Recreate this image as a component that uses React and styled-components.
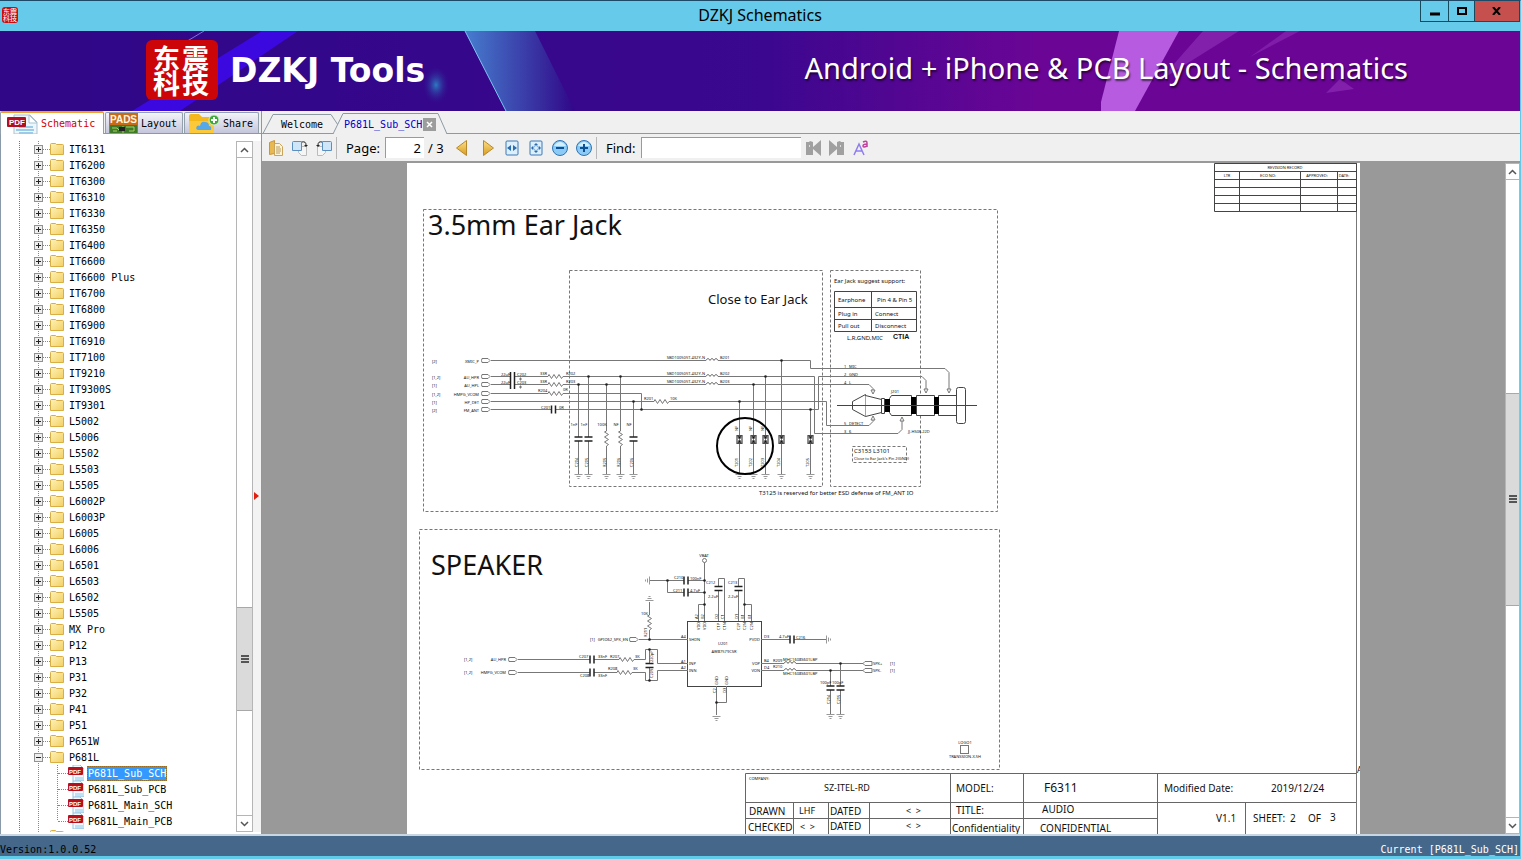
import React, { useState } from "react";
import styled, { createGlobalStyle } from "styled-components";

const GlobalStyle = createGlobalStyle`
  * {
    box-sizing: border-box;
  }
  body {
    margin: 0;
    overflow: hidden;
    font-family: "DejaVu Sans Mono", "Liberation Mono", monospace;
    font-size: 10px;
    color: #000;
  }
  button {
    font: inherit;
    color: inherit;
    padding: 0;
    margin: 0;
    border: 0;
    background: none;
  }
`;

const Window = styled.div`
  display: flex;
  flex-direction: column;
  height: 100vh;
  background: #f0f0f0;
  border-top: 1px solid #1d4a66;
  border-right: 1px solid #5fcbe8;
  border-bottom: 3px solid #5fcbe8;
`;

const TitleBar = styled.header`
  display: grid;
  grid-template-columns: 1fr auto 1fr;
  height: 30px;
  flex: none;
  background: #66cbea;
`;

const AppIcon = styled.span`
  display: grid;
  grid-template-columns: 7px 7px;
  align-content: center;
  justify-content: center;
  width: 16px;
  height: 16px;
  margin: 6px 2px;
  border-radius: 3px;
  background: #c80d0d;
  color: #fff;
  font-family: "Noto Sans CJK SC", sans-serif;
  font-size: 7px;
  line-height: 7px;
`;

const WindowTitle = styled.h1`
  margin: 0;
  font-family: "Noto Sans", sans-serif;
  font-size: 16px;
  font-weight: 400;
  line-height: 29px;
`;

const WindowButtons = styled.div`
  display: flex;
  justify-self: end;
  height: 21px;
`;

const WindowButton = styled.button`
  display: grid;
  place-items: center;
  width: ${(p) => p.$width};
  border: 1px solid #174a5c;
  border-top: 0;
  margin-left: -1px;
  background: ${(p) => (p.$danger ? "#c6504e" : "transparent")};
`;

const Banner = styled.div`
  position: relative;
  display: flex;
  align-items: center;
  justify-content: space-between;
  height: 80px;
  flex: none;
  padding: 0 112px 2px 146px;
  color: #fff;
  font-family: "Noto Sans", sans-serif;
`;

const BannerArt = styled.svg`
  position: absolute;
  inset: 0;
  width: 100%;
  height: 100%;
`;

const Brand = styled.div`
  position: relative;
  display: flex;
  align-items: center;
  gap: 12px;
  font-family: "DejaVu Sans", sans-serif;
  font-size: 33px;
  font-weight: 700;
`;

const Seal = styled.span`
  display: grid;
  grid-template-columns: 29px 29px;
  align-content: center;
  justify-content: center;
  width: 72px;
  height: 60px;
  border-radius: 6px;
  background: #cc0508;
  font-family: "Noto Sans CJK SC", sans-serif;
  font-size: 27px;
  line-height: 25px;
`;

const Slogan = styled.p`
  position: relative;
  margin: 0 0 6px;
  font-size: 29px;
  text-shadow: 1px 2px 2px rgba(0, 0, 0, 0.6);
`;

const Body = styled.div`
  display: flex;
  flex: 1;
  min-height: 0;
`;

const Sidebar = styled.aside`
  display: flex;
  flex-direction: column;
  width: 262px;
  flex: none;
  border-right: 1px solid #8a99a8;
  background: #f0f0f0;
`;

const SideTabs = styled.nav`
  display: flex;
  gap: 1px;
  height: 23px;
  flex: none;
  border-bottom: 1px solid #8a9aa5;
`;

const SideTab = styled.button`
  display: flex;
  align-items: center;
  gap: 3px;
  height: ${(p) => (p.$active ? "23px" : "21px")};
  width: ${(p) => p.$width};
  margin-top: ${(p) => (p.$active ? "0" : "1px")};
  padding-left: ${(p) => (p.$active ? "6px" : "3px")};
  border: 1px solid #91a0aa;
  border-bottom: 0;
  border-radius: 2px 2px 0 0;
  background: ${(p) =>
    p.$active ? "#fff" : "linear-gradient(#f3f3f9, #c5c6dc)"};
  color: ${(p) => (p.$active ? "#d00000" : "#000")};
  ${(p) => p.$active && "border-top: 2px solid #f0a030;"}
`;

const TreePane = styled.div`
  display: flex;
  flex: 1;
  min-height: 0;
  padding: 7px 0 2px;
  border-left: 1px solid #8a9aa8;
  background: #fff;
`;

const Tree = styled.ul`
  flex: 1;
  min-width: 0;
  margin: 0 0 0 18px;
  padding: 0;
  overflow: hidden;
  list-style: none;
  border-left: 1px dotted #777;
`;

const TreeRow = styled.li`
  display: flex;
  align-items: center;
  height: 16px;
  padding-left: 14px;
  background: repeating-linear-gradient(#888 0 1px, #fff 1px 2px) no-repeat 18px
    0 / 1px 100%;
`;

const FileRow = styled(TreeRow)`
  padding-left: 0;
  background:
    repeating-linear-gradient(#888 0 1px, #fff 1px 2px) no-repeat 18px 0 / 1px
      100%,
    repeating-linear-gradient(#888 0 1px, #fff 1px 2px) no-repeat 37px 0 / 1px
      ${(p) => (p.$last ? "8px" : "100%")};

  &::before {
    content: "";
    width: 10px;
    margin-left: 38px;
    border-top: 1px dotted #888;
  }
`;

const NextRow = styled(TreeRow)`
  align-items: flex-start;
  padding: 1px 0 0 30px;
`;

const Toggle = styled.button`
  display: grid;
  place-items: center;
  width: 9px;
  height: 9px;
  border: 1px solid #919191;
  background: #eee;
`;

const Stub = styled.span`
  width: 7px;
  border-top: 1px dotted #888;
`;

const NodeLabel = styled.button`
  height: 15px;
  margin-left: ${(p) => (p.$file ? "3px" : "4px")};
  padding: 0 1px;
  line-height: 15px;
  white-space: pre;
  ${(p) =>
    p.$selected &&
    `
    color: #fff;
    background: #3399ff;
    outline: 1px dotted #9a6a20;
    outline-offset: -1px;
  `}
`;

const Bar = styled.div`
  display: flex;
  flex-direction: column;
  width: ${(p) => p.$width};
  flex: none;
  border: 1px solid #b5b5b5;
  background: #fff;
`;

const BarButton = styled.button`
  display: grid;
  place-items: center;
  height: 16px;
  flex: none;
  border: solid #b5b5b5;
  border-width: ${(p) => (p.$down ? "1px 0 0" : "0 0 1px")};
`;

const BarTrack = styled.div`
  display: grid;
  flex: 1;
  grid-template-rows: ${(p) => p.$rows};
`;

const Thumb = styled.div`
  display: grid;
  place-items: center;
  grid-row: 2;
  border: solid #a8a8a8;
  border-width: 1px 0;
  background: #dadada;
`;

const Splitter = styled.div`
  display: flex;
  align-items: center;
  width: 8px;
  flex: none;
  padding: 18px 0 0 1px;
  background: #f3f3f3;
`;

const Main = styled.main`
  display: flex;
  flex: 1;
  flex-direction: column;
  min-width: 0;
`;

const DocTabs = styled.nav`
  display: flex;
  height: 23px;
  flex: none;
  border-bottom: 1px solid #8d9aa3;
`;

const DocTab = styled.div`
  position: relative;
  display: flex;
  align-items: center;
  gap: 1px;
  width: ${(p) => p.$width};
  height: 23px;
  margin-left: ${(p) => (p.$active ? "-6px" : "1px")};
  padding: 4px 0 0 ${(p) => (p.$active ? "11px" : "18px")};
  color: ${(p) => (p.$active ? "#0000d0" : "#000")};

  svg {
    position: absolute;
    inset: 0;
  }
  button {
    position: relative;
  }
`;

const CloseTab = styled.button`
  display: grid;
  place-items: center;
  width: 13px;
  height: 13px;
  background: #9c9c9c;

  && svg {
    position: static;
  }
`;

const Toolbar = styled.div`
  display: flex;
  align-items: center;
  height: 29px;
  flex: none;
  padding: 0 2px;
  border-bottom: 2px solid #999;
  font-family: "Noto Sans", sans-serif;
  font-size: 13px;
`;

const ToolButton = styled.button`
  display: grid;
  place-items: center;
  width: 24px;
  height: 24px;
  margin-right: ${(p) => p.$gap || "0"};
`;

const Divider = styled.span`
  width: 1px;
  height: 22px;
  background: #b8b8b8;
`;

const Label = styled.label`
  margin: 0 5px 0 9px;
`;

const Field = styled.input`
  width: ${(p) => p.$width};
  height: 21px;
  padding: 0 3px;
  border: solid #9a9a9a;
  border-width: 1px 0 0 1px;
  border-radius: 0;
  background: #fff;
  font: inherit;
  text-align: ${(p) => p.$align || "left"};
`;

const PageCount = styled.span`
  width: 22px;
  margin-left: 4px;
`;

const Viewer = styled.div`
  display: flex;
  flex: 1;
  min-height: 0;
`;

const Canvas = styled.div`
  display: flex;
  flex: 1;
  justify-content: center;
  align-items: flex-start;
  min-width: 0;
  overflow: hidden;
  background: #999;
`;

const Sheet = styled.svg`
  flex: none;
  display: block;
  background: #fff;
  font-family: "Noto Sans", sans-serif;
`;

const StatusBar = styled.footer`
  display: flex;
  align-items: center;
  justify-content: space-between;
  height: 22px;
  flex: none;
  padding: 6px 1px 0 0;
  border-top: 2px solid #c9d6e2;
  background: #44678a;

  span:last-child {
    color: #fff;
  }
`;

/* ---------- icons ---------- */

const PdfIcon = ({ size = 16 }) => (
  <svg width={size} height={size} viewBox="0 0 16 16" aria-hidden="true">
    <path d="M5 0h7l4 4v12H5z" fill="#f4faff" stroke="#9cc3dc" />
    <path d="M7 13h8M7 15h8" stroke="#8cc8ea" />
    <rect x="0" y="2" width="15" height="8" rx="1" fill="#b80f1d" />
    <text x="1" y="9" fontSize="6" fontWeight="700" fill="#fff" fontFamily="Liberation Sans">
      PDF
    </text>
  </svg>
);

const SchematicIcon = () => (
  <svg width="31" height="20" viewBox="0 0 31 20" aria-hidden="true">
    <path d="M7 1h16l7 7v12H7z" fill="#eef6fb" stroke="#a9c3d2" />
    <path d="M22 1v8h8z" fill="#fff" stroke="#a9c3d2" />
    <path d="M12 13h14M9 16h18M12 19h14" stroke="#9ccbe8" strokeWidth="2" />
    <rect x="0" y="3" width="19" height="10" rx="1" fill="#b01022" />
    <text x="2" y="11" fontSize="8" fontWeight="700" fill="#fff" fontFamily="Liberation Sans">
      PDF
    </text>
  </svg>
);

const PadsIcon = () => (
  <svg width="29" height="20" viewBox="0 0 29 20" aria-hidden="true">
    <rect width="29" height="20" fill="#c86a18" />
    <rect x="1" y="12" width="27" height="8" fill="#3f7a2a" />
    <path d="M3 15h5l3 3M14 13v7M17 14h8v4h-5M4 18h4" stroke="#a8d060" fill="none" />
    <rect x="10" y="14" width="6" height="4" fill="#222" />
    <text x="1" y="10" fontSize="10" fontWeight="700" fill="#fff6e0" fontFamily="Liberation Sans">
      PADS
    </text>
  </svg>
);

const ShareIcon = () => (
  <svg width="32" height="20" viewBox="0 0 32 20" aria-hidden="true">
    <path d="M1 3q0-2 2-2h8l3 3h10q2 0 2 2v14H1z" fill="#f5b81c" />
    <path d="M1 8h25v12H1z" fill="#fcc93a" />
    <path d="M10 17q-3-1-1-4q2-1 3 0q1-5 5-4q4 0 4 4q3 0 2 4z" fill="#56a8e8" />
    <circle cx="26" cy="7" r="5" fill="#3caa3a" stroke="#d8f0d0" />
    <path d="M26 4v6M23 7h6" stroke="#fff" strokeWidth="2" />
  </svg>
);

const FolderIcon = () => (
  <svg width="14" height="12" viewBox="0 0 14 12" aria-hidden="true">
    <defs>
      <linearGradient id="folder" x1="0" y1="0" x2="1" y2="1">
        <stop offset="0" stopColor="#fff3b8" />
        <stop offset="1" stopColor="#f2cf63" />
      </linearGradient>
    </defs>
    <path d="M.5 1.5q0-1 1-1h4l1 1h6q1 0 1 1v9H.5z" fill="url(#folder)" stroke="#d9ae45" />
  </svg>
);

const Grip = () => (
  <svg width="8" height="8" viewBox="0 0 8 8" aria-hidden="true">
    <path d="M0 1h8M0 4h8M0 7h8" stroke="#555" strokeWidth="2" />
  </svg>
);

const Chevron = ({ down }) => (
  <svg width="9" height="6" viewBox="0 0 9 6" aria-hidden="true">
    <path d={down ? "M1 1l3.500 3.500L8 1" : "M1 5l3.500-3.500L8 5"} fill="none" stroke="#555" strokeWidth="1.500" />
  </svg>
);

const Glyph = ({ children, w = 16, h = 16 }) => (
  <svg width={w} height={h} viewBox={`0 0 ${w} ${h}`} fill="none" aria-hidden="true">
    {children}
  </svg>
);

const OpenGlyph = () => (
  <Glyph>
    <path d="M1.500 2.500l5-2v13l-5 1z" fill="#e9b850" stroke="#c7953a" />
    <path d="M6.500 3.500h5l3 3v9h-8z" fill="#fdf3d6" stroke="#c9a45a" />
    <path d="M8 7h4M8 9h5M8 11h5M8 13h4" stroke="#b99a5c" />
  </Glyph>
);

const RotateGlyph = ({ flip }) => (
  <Glyph>
    <g transform={flip ? "translate(16 0) scale(-1 1)" : undefined}>
      <path d="M6.500 6.500h8v9h-5l-3-3z" fill="#f5f5f5" stroke="#bbb" />
      <path d="M.5 2.500q0-1 1-1h8v9h-9z" fill="#cfe6f8" stroke="#5b8fc0" />
      <path d="M10 2q4-1 4 3" stroke="#222" />
      <path d="M12 5h4l-2 2z" fill="#222" />
    </g>
  </Glyph>
);

const ArrowGlyph = ({ flip }) => (
  <Glyph>
    <defs>
      <linearGradient id="gold" x1="0" y1="0" x2="0" y2="1">
        <stop offset="0" stopColor="#fbe08a" />
        <stop offset="1" stopColor="#d99b1c" />
      </linearGradient>
    </defs>
    <path
      d={flip ? "M3.500 .5l10 7.500-10 7.500z" : "M12.500 .5l-10 7.500 10 7.500z"}
      fill="url(#gold)"
      stroke="#b8892c"
    />
  </Glyph>
);

const FitGlyph = ({ page }) => (
  <Glyph>
    <rect x="2" y="1" width="12" height="14" rx="1" fill="#dceffc" stroke="#3d78b4" />
    {page ? (
      <g>
        <path d="M8 3l2 2H6zM8 13l2-2H6zM3 8l2-2v4zM13 8l-2-2v4z" fill="#2b6cae" />
        <circle cx="8" cy="8" r="2.500" stroke="#6aa2d4" />
      </g>
    ) : (
      <path d="M3 8l4-3v6zM13 8l-4-3v6z" fill="#2b6cae" />
    )}
  </Glyph>
);

const ZoomGlyph = ({ plus }) => (
  <Glyph w={18} h={18}>
    <circle cx="9" cy="9" r="7.500" fill="#8ccbf5" stroke="#2f74b5" />
    <path d="M3 7q6-8 12 0z" fill="#d7effd" />
    <path d={plus ? "M5 9h8M9 5v8" : "M5 9h8"} stroke="#0f4f94" strokeWidth="2" />
  </Glyph>
);

const FindGlyph = ({ flip }) => (
  <Glyph>
    <g transform={flip ? "translate(16 0) scale(-1 1)" : undefined} fill="#a0a0a0">
      <path d="M1 2h3l1-1 3 1v5l8-7v16l-8-7v6H1z" />
      <path d="M4 5h1v2H4z" fill="#ddd" />
    </g>
  </Glyph>
);

/* ---------- schematic symbols ---------- */

const T = ({ x, y, s = 4, a, r, children, ...rest }) => (
  <text
    x={x}
    y={y}
    fontSize={s}
    textAnchor={a}
    stroke="none"
    fill="#111"
    transform={r ? `rotate(-90 ${x} ${y})` : undefined}
    {...rest}
  >
    {children}
  </text>
);

const Dot = ({ x, y }) => <circle cx={x} cy={y} r="1.300" fill="#222" stroke="none" />;

const CapV = ({ x, y = 439 }) => (
  <g>
    <rect x={x - 2} y={y - 2} width="4" height="4" fill="#fff" stroke="none" />
    <path d={`M${x - 4} ${y - 2}h8M${x - 4} ${y + 2}h8`} strokeWidth="1.500" stroke="#222" />
  </g>
);

const CapH = ({ x, y }) => (
  <g>
    <rect x={x - 2} y={y - 2} width="4" height="4" fill="#fff" stroke="none" />
    <path d={`M${x - 2} ${y - 4}v8M${x + 2} ${y - 4}v8`} strokeWidth="1.500" stroke="#222" />
  </g>
);

const ResH = ({ x, y }) => (
  <g>
    <path d={`M${x} ${y}h15`} stroke="#fff" strokeWidth="2" />
    <path d={`M${x} ${y}l1-2 2.500 4 2.500-4 2.500 4 2.500-4 2.500 4 1.500-2`} />
  </g>
);

const ResV = ({ x, y }) => (
  <g>
    <path d={`M${x} ${y}v15`} stroke="#fff" strokeWidth="2" />
    <path d={`M${x} ${y}l-2 1 4 2.500-4 2.500 4 2.500-4 2.500 4 2.500-2 1.500`} />
  </g>
);

const Coil = ({ x, y }) => (
  <g>
    <path d={`M${x} ${y}h12`} stroke="#fff" strokeWidth="2" />
    <path d={`M${x} ${y}q2-4 4 0q2-4 4 0q2-4 4 0`} />
  </g>
);

const Gnd = ({ x, y, turn = 0 }) => (
  <path
    d={`M${x - 4} ${y}h8M${x - 2} ${y + 2}h4M${x - 1} ${y + 4}h2`}
    transform={`rotate(${turn} ${x} ${y})`}
    stroke="#999"
  />
);

const Port = ({ x, y, flip }) => (
  <path
    d={
      flip
        ? `M${x} ${y}l2-2h7v4h-7z`
        : `M${x} ${y - 2}h6l2 2-2 2h-6q-1-2 0-4z`
    }
    fill="#fff"
    stroke="#777"
  />
);

const Tvs = ({ x }) => (
  <g>
    <rect x={x - 2} y="435.500" width="5" height="8" fill="#fff" stroke="#222" />
    <path d={`M${x - 2} 436h5l-2.500 3.500zM${x - 2} 443h5l-2.500-3.500z`} fill="#111" />
  </g>
);

const audioNets = [
  { y: 360.5, ref: "[2]", name: "XMIC_P" },
  { y: 376.5, ref: "[1,2]", name: "AU_HPR" },
  { y: 384.5, ref: "[1]", name: "AU_HPL" },
  { y: 393.5, ref: "[1,2]", name: "HMPG_VCOM" },
  { y: 401.5, ref: "[1]", name: "HP_DET" },
  { y: 409.5, ref: "[2]", name: "FM_ANT" },
];

const shunts = [
  { x: 578, from: 384.5, value: "1nF", ref: "C204" },
  { x: 588, from: 376.5, value: "1nF", ref: "C205" },
  { x: 606, from: 384.5, value: "100K", ref: "R205", res: true },
  { x: 620, from: 376.5, value: "NF", ref: "R206", res: true },
  { x: 633, from: 401.5, value: "NF", ref: "C206" },
];

const clamps = [
  { x: 739, from: 401.5, ref: "T201" },
  { x: 753, from: 384.5, ref: "T202" },
  { x: 765, from: 376.5, ref: "T203" },
  { x: 781, from: 360.5, ref: "T204" },
  { x: 810, from: 409.5, ref: "T205" },
];

const EarJack = () => (
  <g>
    <g stroke="#777" strokeDasharray="3 2">
      <rect x="423.500" y="209.500" width="574" height="302" />
      <rect x="569.500" y="270.500" width="253" height="216" />
      <rect x="830.500" y="270.500" width="90" height="216" />
      <rect x="852.500" y="446.500" width="54" height="16" />
    </g>
    <T x={428} y={235} s={27}>3.5mm Ear Jack</T>
    <T x={708} y={304} s={13}>Close to Ear Jack</T>
    <T x={759} y={495} s={6}>T3125 is reserved for better ESD defense of FM_ANT IO</T>
    <T x={834} y={283} s={6}>Ear Jack suggest support:</T>

    <path d="M834.500 291.500h82v40h-82zM834.500 307.500h82M834.500 319.500h82M871.500 291.500v40" stroke="#444" />
    <T x={838} y={302} s={6}>Earphone</T>
    <T x={877} y={302} s={6}>Pin 4 &amp; Pin 5</T>
    <T x={838} y={316} s={6}>Plug in</T>
    <T x={875} y={316} s={6}>Connect</T>
    <T x={838} y={328} s={6}>Pull out</T>
    <T x={875} y={328} s={6}>Disconnect</T>
    <T x={847} y={340} s={6}>L,R,GND,MIC</T>
    <T x={893} y={339} s={7} fontWeight="700" fontFamily="Liberation Sans">CTIA</T>

    {audioNets.map((n) => (
      <g key={n.name}>
        <T x={432} y={n.y + 2}>{n.ref}</T>
        <T x={479} y={n.y + 2} a="end">{n.name}</T>
        <Port x={482} y={n.y} />
      </g>
    ))}

    <path d="M491 360.500H810.500V368.500H945l4 4V390" />
    <path d="M491 376.500H814.500V433.500H898l4-4V420" />
    <path d="M491 384.500H869l4 4V391" />
    <path d="M491 393.500H641.500V409.500" />
    <path d="M491 401.500H826.500V425.500H869l4-4V419" />
    <path d="M491 409.500H818.500V376.500H922l4 4V390" />
    <path
      d="M947 389h4l-2 4zM924 389h4l-2 4zM871 390h4l-2 4zM871 420h4l-2-4zM900 421h4l-2-4z"
      fill="#fff"
    />

    <rect x="511" y="374" width="3" height="13" fill="#fff" stroke="none" />
    <path d="M510.500 372v17M514.500 372v17" stroke="#222" strokeWidth="1.500" />
    <path d="M519 379h3M520.500 377.500v3M519 387h3M520.500 385.500v3" />
    <T x={501} y={376}>22uF</T>
    <T x={517} y={376}>C202</T>
    <T x={501} y={384}>22uF</T>
    <T x={517} y={384}>C203</T>
    <ResH x={548} y={376.5} />
    <ResH x={548} y={384.5} />
    <ResH x={548} y={393.5} />
    <T x={540} y={375}>33R</T>
    <T x={566} y={375}>R202</T>
    <T x={540} y={383}>33R</T>
    <T x={566} y={383}>R203</T>
    <T x={538} y={392}>R204</T>
    <T x={563} y={391}>0R</T>
    <CapH x={553.5} y={409.5} />
    <T x={541} y={409}>C201</T>
    <T x={559} y={409}>0R</T>
    <ResH x={654} y={401.5} />
    <T x={644} y={400}>R201</T>
    <T x={670} y={400}>10K</T>

    {[360.5, 376.5, 384.5].map((y, i) => (
      <g key={y}>
        <Coil x={706} y={y} />
        <T x={705} y={y - 2} a="end">SBD100505T-432Y-N</T>
        <T x={720} y={y - 2}>{`B20${i + 1}`}</T>
      </g>
    ))}

    {shunts.map((s) => (
      <g key={s.ref}>
        <path d={`M${s.x + 0.5} ${s.from}V474`} />
        <Dot x={s.x + 0.5} y={s.from} />
        {s.res ? <ResV x={s.x + 0.5} y={431} /> : <CapV x={s.x + 0.5} />}
        <T x={s.x - 4} y={426} a="middle">{s.value}</T>
        <T x={s.x} y={467} r>{s.ref}</T>
        <Gnd x={s.x + 0.5} y={474.5} />
      </g>
    ))}
    <Dot x={641.5} y={409.5} />

    {clamps.map((c) => (
      <g key={c.ref}>
        <path d={`M${c.x + 0.5} ${c.from}V474`} />
        <Dot x={c.x + 0.5} y={c.from} />
        <Tvs x={c.x} />
        {c.x < 770 && <T x={c.x - 1} y={431} r>NF</T>}
        <T x={c.x - 1} y={467} r>{c.ref}</T>
        <Gnd x={c.x + 0.5} y={474.5} />
      </g>
    ))}
    <circle cx="745" cy="446" r="28" stroke="#000" strokeWidth="2" />

    <T x={844} y={368}>1</T>
    <T x={849} y={368}>MIC</T>
    <T x={844} y={376}>2</T>
    <T x={849} y={376}>GND</T>
    <T x={844} y={384}>4</T>
    <T x={849} y={384}>L</T>
    <T x={844} y={425}>5</T>
    <T x={849} y={425}>DETECT</T>
    <T x={844} y={433}>3</T>
    <T x={849} y={433}>6</T>
    <T x={891} y={393}>J201</T>
    <T x={908} y={433}>JJ-HS06.22D</T>

    <g fill="#fff" stroke="#444">
      <path d="M852.500 401.500l13-7v22l-13-7z" />
      <path d="M865.500 395.500l16 4v13l-16 4" />
      <path d="M881.500 398.500h3v15h-3z" />
      <path d="M891.500 395.500h20v20h-20l-2-3v-14z" />
      <path d="M916.500 395.500h18v20h-18zM938.500 395.500h18v20h-18z" />
      <rect x="956.500" y="387.500" width="9" height="36" rx="2" />
    </g>
    <path d="M885 399h5v13h-5zM911 397h5v17h-5zM934 397h5v17h-5z" fill="#000" stroke="none" />
    <path d="M837 405.500H977" stroke="#444" />

    <T x={854} y={453} s={6}>C3153 L3101</T>
    <T x={854} y={460} s={4}>Close to Ear Jack's Pin 2(GND)</T>
  </g>
);

const Speaker = () => (
  <g>
    <rect x="419.500" y="529.500" width="580" height="240" stroke="#777" strokeDasharray="3 2" />
    <T x={431} y={575} s={27}>SPEAKER</T>

    <rect x="687.500" y="621.500" width="74" height="65" stroke="#444" />
    <T x={723} y={645} a="middle">U201</T>
    <T x={724} y={653} a="middle">AW87579CSR</T>

    <T x={704} y={557} a="middle">VBAT</T>
    <path d="M704.500 562V621M704.500 604.500H698.500V621M650 580.500H704M667.500 580.500V592.500H704" />
    <circle cx="704.500" cy="560.500" r="2" fill="#fff" />
    <CapH x={686} y={580.5} />
    <CapH x={686} y={592.5} />
    <Gnd x={649.5} y={580.5} turn={90} />
    <Dot x={667.5} y={580.5} />
    <Dot x={704.5} y={580.5} />
    <Dot x={704.5} y={592.5} />
    <Dot x={704.5} y={604.5} />
    <T x={674} y={579}>C210</T>
    <T x={690} y={580}>100nF</T>
    <T x={673} y={592}>C211</T>
    <T x={690} y={592}>4.7uF</T>

    <path d="M718.500 621V578.500H724.500V621M738.500 621V578.500H744.500V621M744.500 604.500H751.500V621" />
    <CapV x={718.5} y={588.5} />
    <CapV x={738.5} y={588.5} />
    <Dot x={744.5} y={604.5} />
    <T x={706} y={584}>C212</T>
    <T x={728} y={584}>C213</T>
    <T x={708} y={598}>2.2uF</T>
    <T x={728} y={598}>2.2uF</T>
    {[
      [698, "A2", "VDD"],
      [704, "B2", "VDD"],
      [718, "D2", "C1P"],
      [724, "C1", "C1N"],
      [738, "D1", "C2P"],
      [744, "B1", "C2N"],
      [751, "B1", "C2N"],
    ].map(([x, pin, name]) => (
      <g key={x}>
        <T x={x} y={619} r>{pin}</T>
        <T x={x + 2} y={630} r>{name}</T>
      </g>
    ))}

    <T x={590} y={641}>[1]</T>
    <T x={628} y={641} a="end">GPIO62_SPK_EN</T>
    <Port x={630} y={639.5} />
    <path d="M639 639.500H688M649.500 602V639.500" />
    <ResV x={649.5} y={615} />
    <Gnd x={649.5} y={600.5} turn={180} />
    <Dot x={649.5} y={639.5} />
    <T x={641} y={615}>10K</T>
    <T x={647} y={637} r>R211</T>
    <T x={681} y={638}>A4</T>
    <T x={689} y={641}>SHDN</T>

    <T x={464} y={661}>[1,2]</T>
    <T x={506} y={661} a="end">AU_HPR</T>
    <Port x={509} y={659.5} />
    <T x={464} y={674}>[1,2]</T>
    <T x={506} y={674} a="end">HMPG_VCOM</T>
    <Port x={509} y={672.5} />
    <path d="M518 659.500H645.500V649.500H657.500V663.500H688" />
    <path d="M518 672.500H645.500V680.500H657.500V670.500H688" />
    <path d="M649.500 649.500V680.500" />
    <CapV x={649.5} y={665.5} />
    <Dot x={649.5} y={649.5} />
    <Dot x={649.5} y={680.5} />
    <CapH x={592} y={659.5} />
    <CapH x={592} y={672.5} />
    <ResH x={619} y={659.5} />
    <ResH x={617} y={672.5} />
    <T x={579} y={658}>C207</T>
    <T x={598} y={658}>33nF</T>
    <T x={610} y={658}>R207</T>
    <T x={635} y={658}>3K</T>
    <T x={580} y={677}>C208</T>
    <T x={598} y={677}>33nF</T>
    <T x={608} y={670}>R208</T>
    <T x={633} y={670}>3K</T>
    <T x={653} y={662} r>220pF</T>
    <T x={653} y={678} r>C209</T>
    <T x={681} y={663}>A1</T>
    <T x={681} y={669}>A2</T>
    <T x={689} y={665}>INP</T>
    <T x={689} y={672}>INN</T>

    <path d="M716.500 686V715M726.500 686V702.500H716.500" />
    <Dot x={716.5} y={702.5} />
    <Gnd x={716.5} y={716.5} />
    <T x={718} y={685} r>GND</T>
    <T x={728} y={685} r>GND</T>
    <T x={716} y={693} r>C2</T>
    <T x={726} y={693} r>D3</T>

    <path d="M761 639.500H826M761 663.500H864M761 670.500H864M840.500 663.500V714M830.500 670.500V714" />
    <CapH x={792} y={639.5} />
    <Gnd x={826.5} y={639.5} turn={-90} />
    <Coil x={784} y={663.5} />
    <Coil x={784} y={670.5} />
    <Dot x={840.5} y={663.5} />
    <Dot x={830.5} y={670.5} />
    <CapV x={830.5} y={688} />
    <CapV x={840.5} y={688} />
    <Gnd x={830.5} y={714.5} />
    <Gnd x={840.5} y={714.5} />
    <Port x={863} y={663.5} flip />
    <Port x={863} y={670.5} flip />
    <T x={760} y={641} a="end">PVDD</T>
    <T x={760} y={665} a="end">VOP</T>
    <T x={760} y={672} a="end">VON</T>
    <T x={764} y={638}>D3</T>
    <T x={764} y={662}>B4</T>
    <T x={764} y={669}>D4</T>
    <T x={779} y={638}>4.7uF</T>
    <T x={796} y={639}>C216</T>
    <T x={773} y={662}>R209</T>
    <T x={783} y={661}>MHC1608S601LBP</T>
    <T x={773} y={668}>R210</T>
    <T x={783} y={675}>MHC1608S601LBP</T>
    <T x={873} y={665}>SPK+</T>
    <T x={890} y={665}>[1]</T>
    <T x={873} y={672}>SPK-</T>
    <T x={890} y={672}>[1]</T>
    <T x={820} y={684}>100pF</T>
    <T x={832} y={684}>100pF</T>
    <T x={830} y={704} r>C214</T>
    <T x={840} y={704} r>C215</T>

    <T x={965} y={744} a="middle">LOGO1</T>
    <rect x="960.500" y="745.500" width="8" height="8" />
    <T x={965} y={758} a="middle">TRANSSION-X.5H</T>
  </g>
);

const SheetFrame = () => (
  <g stroke="#444">
    <path d="M1356.500 163V834" stroke="#777" />
    <path d="M1214.500 163.500h142v48h-142zM1214.500 171.500h142M1214.500 179.500h142M1214.500 187.500h142M1214.500 195.500h142M1214.500 203.500h142M1239.500 171.500v40M1300.500 171.500v40M1337.500 171.500v40" />
    <T x={1285} y={169} a="middle">REVISION RECORD</T>
    <T x={1227} y={177} a="middle">LTR</T>
    <T x={1268} y={177} a="middle">ECO NO:</T>
    <T x={1317} y={177} a="middle">APPROVED:</T>
    <T x={1344} y={177} a="middle">DATE:</T>

    <path
      d="M745.500 834V773.500H1356M745.500 802.500H1356M745.500 818.500H1157M793.500 802.500V834M828.500 802.500V834M869.500 802.500V834M950.500 773.500V834M1023.500 773.500V834M1157.500 773.500V834M1245.500 802.500V834"
      stroke="#666"
    />
    <T x={749} y={780}>COMPANY:</T>
    <T x={824} y={791} s={9}>SZ-ITEL-RD</T>
    <T x={956} y={792} s={10}>MODEL:</T>
    <T x={1044} y={792} s={12}>F6311</T>
    <T x={1164} y={792} s={10}>Modified Date:</T>
    <T x={1271} y={792} s={10}>2019/12/24</T>
    <T x={749} y={815} s={10}>DRAWN</T>
    <T x={799} y={814} s={9}>LHF</T>
    <T x={830} y={815} s={10}>DATED</T>
    <T x={906} y={814} s={9} xmlSpace="preserve">{"<  >"}</T>
    <T x={956} y={814} s={10}>TITLE:</T>
    <T x={1042} y={813} s={10}>AUDIO</T>
    <T x={748} y={831} s={10}>CHECKED</T>
    <T x={800} y={830} s={9} xmlSpace="preserve">{"<  >"}</T>
    <T x={830} y={830} s={10}>DATED</T>
    <T x={906} y={829} s={9} xmlSpace="preserve">{"<  >"}</T>
    <T x={952} y={832} s={10}>Confidentiality</T>
    <T x={1040} y={832} s={10}>CONFIDENTIAL</T>
    <T x={1216} y={822} s={10}>V1.1</T>
    <T x={1253} y={822} s={10}>SHEET:</T>
    <T x={1290} y={822} s={10}>2</T>
    <T x={1308} y={822} s={10}>OF</T>
    <T x={1330} y={821} s={10}>3</T>
    <T x={1357} y={773} s={8}>A</T>
  </g>
);

/* ---------- page ---------- */

const folders = [
  "IT6131", "IT6200", "IT6300", "IT6310", "IT6330", "IT6350", "IT6400",
  "IT6600", "IT6600 Plus", "IT6700", "IT6800", "IT6900", "IT6910", "IT7100",
  "IT9210", "IT9300S", "IT9301", "L5002", "L5006", "L5502", "L5503", "L5505",
  "L6002P", "L6003P", "L6005", "L6006", "L6501", "L6503", "L6502", "L5505",
  "MX Pro", "P12", "P13", "P31", "P32", "P41", "P51", "P651W",
];

const files = ["P681L_Sub_SCH", "P681L_Sub_PCB", "P681L_Main_SCH", "P681L_Main_PCB"];

const Folder = ({ name, open }) => (
  <TreeRow>
    <Toggle aria-label={open ? "Collapse" : "Expand"}>
      <Glyph w={5} h={5}>
        <path d={open ? "M0 2.500h5" : "M0 2.500h5M2.500 0v5"} stroke="#222" />
      </Glyph>
    </Toggle>
    <Stub />
    <FolderIcon />
    <NodeLabel>{name}</NodeLabel>
  </TreeRow>
);

const ScrollBar = ({ width, rows }) => (
  <Bar $width={width}>
    <BarButton aria-label="Scroll up">
      <Chevron />
    </BarButton>
    <BarTrack $rows={rows}>
      <Thumb>
        <Grip />
      </Thumb>
    </BarTrack>
    <BarButton $down aria-label="Scroll down">
      <Chevron down />
    </BarButton>
  </Bar>
);

function App() {
  const [selected, setSelected] = useState("P681L_Sub_SCH");
  const [page, setPage] = useState("2");
  const [query, setQuery] = useState("");

  return (
    <>
      <GlobalStyle />
      <Window>
        <TitleBar>
          <AppIcon>
            <span>东</span>
            <span>震</span>
            <span>科</span>
            <span>技</span>
          </AppIcon>
          <WindowTitle>DZKJ Schematics</WindowTitle>
          <WindowButtons>
            <WindowButton $width="29px" aria-label="Minimize">
              <Glyph w={10} h={10}>
                <path d="M0 8h10" stroke="#000" strokeWidth="3" />
              </Glyph>
            </WindowButton>
            <WindowButton $width="27px" aria-label="Maximize">
              <Glyph w={10} h={8}>
                <rect x="1" y="1" width="8" height="6" stroke="#000" strokeWidth="2" />
              </Glyph>
            </WindowButton>
            <WindowButton $width="46px" $danger aria-label="Close">
              <Glyph w={10} h={8}>
                <path d="M1 0l7 8M8 0L1 8" stroke="#000" strokeWidth="2" />
              </Glyph>
            </WindowButton>
          </WindowButtons>
        </TitleBar>

        <Banner>
          <BannerArt viewBox="0 0 1520 80" preserveAspectRatio="none" aria-hidden="true">
            <defs>
              <linearGradient id="banner">
                <stop offset="0" stopColor="#2f0787" />
                <stop offset="0.500" stopColor="#3a078e" />
                <stop offset="0.680" stopColor="#6a0596" />
                <stop offset="1" stopColor="#6a0596" />
              </linearGradient>
              <linearGradient id="beam">
                <stop offset="0" stopColor="#4a9be0" />
                <stop offset="1" stopColor="#2f0787" />
              </linearGradient>
              <radialGradient id="glow">
                <stop offset="0" stopColor="#2d7ac0" />
                <stop offset="1" stopColor="#2f0787" stopOpacity="0" />
              </radialGradient>
            </defs>
            <rect width="1520" height="80" fill="url(#banner)" />
            <path d="M262 0h36L180 80h-48z" fill="#3c08e0" />
            <path d="M204 0l-20 12" stroke="#7a70e0" />
            <path d="M465 0h70l40 80h-69z" fill="url(#beam)" opacity="0.800" />
            <path d="M465 0l41 80" stroke="#7cc4f4" />
            <ellipse cx="436" cy="54" rx="14" ry="20" fill="url(#glow)" />
            <path d="M1119 0h60l-44 80h-34v-9z" fill="#b75ce0" />
            <path d="M1203 0h36l-80 50z" fill="#8d2cb4" opacity="0.700" />
            <path d="M1286 0h14l-50 26z" fill="#8d2cb4" opacity="0.600" />
            <path d="M1340 48l14 10-28 4z" fill="#8d2cb4" opacity="0.700" />
          </BannerArt>
          <Brand>
            <Seal>
              <span>东</span>
              <span>震</span>
              <span>科</span>
              <span>技</span>
            </Seal>
            DZKJ Tools
          </Brand>
          <Slogan>Android + iPhone &amp; PCB Layout - Schematics</Slogan>
        </Banner>

        <Body>
          <Sidebar>
            <SideTabs>
              <SideTab $active $width="104px">
                <SchematicIcon />
                Schematic
              </SideTab>
              <SideTab $width="78px">
                <PadsIcon />
                Layout
              </SideTab>
              <SideTab $width="75px">
                <ShareIcon />
                Share
              </SideTab>
            </SideTabs>
            <TreePane>
              <Tree>
                {folders.map((name, i) => (
                  <Folder key={i} name={name} />
                ))}
                <Folder name="P681L" open />
                {files.map((name, i) => (
                  <FileRow key={name} $last={i === files.length - 1}>
                    <PdfIcon />
                    <NodeLabel
                      $file
                      $selected={name === selected}
                      onClick={() => setSelected(name)}
                    >
                      {name}
                    </NodeLabel>
                  </FileRow>
                ))}
                <NextRow>
                  <FolderIcon />
                </NextRow>
              </Tree>
              <ScrollBar width="17px" rows="449fr 104fr 104fr" />
              <Splitter>
                <Glyph w={5} h={8}>
                  <path d="M0 0l5 4-5 4z" fill="#e02010" />
                </Glyph>
              </Splitter>
            </TreePane>
          </Sidebar>

          <Main>
            <DocTabs>
              <DocTab $width="76px">
                <Glyph w={76} h={23}>
                  <path d="M0 22.500L10 3.500H68L75 14" stroke="#8d9aa3" />
                </Glyph>
                <button>Welcome</button>
              </DocTab>
              <DocTab $width="116px" $active>
                <Glyph w={116} h={23}>
                  <path d="M0 23L10 2.500H105L114 23z" fill="#f0f0f0" />
                  <path d="M0 23L10 2.500H105L114 23" stroke="#8d9aa3" />
                </Glyph>
                <button>P681L_Sub_SCH</button>
                <CloseTab aria-label="Close tab">
                  <Glyph w={7} h={7}>
                    <path d="M1 1l5 5M6 1L1 6" stroke="#fff" strokeWidth="1.500" />
                  </Glyph>
                </CloseTab>
              </DocTab>
            </DocTabs>

            <Toolbar>
              <ToolButton aria-label="Open"><OpenGlyph /></ToolButton>
              <ToolButton aria-label="Rotate right"><RotateGlyph /></ToolButton>
              <ToolButton aria-label="Rotate left"><RotateGlyph flip /></ToolButton>
              <Divider />
              <Label htmlFor="page">Page:</Label>
              <Field
                id="page"
                $width="39px"
                $align="right"
                value={page}
                onChange={(e) => setPage(e.target.value)}
              />
              <PageCount>/ 3</PageCount>
              <ToolButton $gap="2px" aria-label="Previous page"><ArrowGlyph /></ToolButton>
              <ToolButton aria-label="Next page"><ArrowGlyph flip /></ToolButton>
              <ToolButton aria-label="Fit width"><FitGlyph /></ToolButton>
              <ToolButton aria-label="Fit page"><FitGlyph page /></ToolButton>
              <ToolButton aria-label="Zoom out"><ZoomGlyph /></ToolButton>
              <ToolButton aria-label="Zoom in"><ZoomGlyph plus /></ToolButton>
              <Divider />
              <Label htmlFor="find">Find:</Label>
              <Field
                id="find"
                $width="160px"
                value={query}
                onChange={(e) => setQuery(e.target.value)}
              />
              <ToolButton aria-label="Find previous"><FindGlyph /></ToolButton>
              <ToolButton aria-label="Find next"><FindGlyph flip /></ToolButton>
              <ToolButton aria-label="Match case">
                <Glyph>
                  <path d="M1 15L6 4l5 11M3 11h6" stroke="#8f7cf0" strokeWidth="1.500" />
                  <path d="M10 2q4-2 4 1v4M14 4q-4 0-4 2t4 0" stroke="#c0409c" strokeWidth="1.500" />
                </Glyph>
              </ToolButton>
            </Toolbar>

            <Viewer>
              <Canvas>
                <Sheet
                  width="953"
                  height="671"
                  viewBox="407 163 953 671"
                  fill="none"
                  stroke="#777"
                  role="img"
                  aria-label="Schematic sheet 2"
                >
                  <EarJack />
                  <Speaker />
                  <SheetFrame />
                </Sheet>
              </Canvas>
              <ScrollBar width="15px" rows="214fr 213fr 212fr" />
            </Viewer>
          </Main>
        </Body>

        <StatusBar>
          <span>Version:1.0.0.52</span>
          <span>Current [P681L_Sub_SCH]</span>
        </StatusBar>
      </Window>
    </>
  );
}

export default App;
